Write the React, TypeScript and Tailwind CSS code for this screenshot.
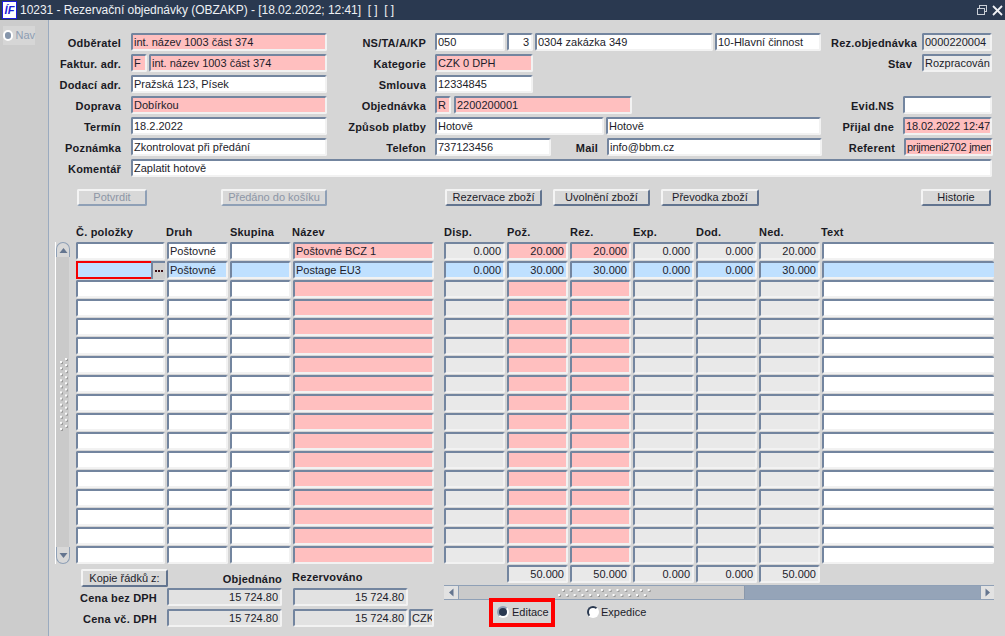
import React from "react";

type Tone = "white" | "pink" | "grey" | "blue" | "total";
const toneClass: Record<Tone, string> = {
  white: "bg-white",
  pink: "bg-[#ffbfbf]",
  grey: "bg-[#e9e9e9]",
  blue: "bg-[#bfe0ff]",
  total: "bg-[#e2e2e2]",
};

function Field({ w, tone = "white", right, h = "h-[18px]", children, className = "" }: { w: string; tone?: Tone; right?: boolean; h?: string; children?: React.ReactNode; className?: string }) {
  return (
    <div
      className={`${w} ${h} ${toneClass[tone]} ${right ? "justify-end pr-[2px]" : "pl-[1px]"} ${className} shrink-0 flex items-center overflow-hidden whitespace-nowrap rounded-[2px] border-2 border-t-[#73859f] border-l-[#73859f] border-r-[#f2f2f2] border-b-[#f2f2f2] pt-[1px] text-[11px] leading-none text-[#1c1c2a]`}
    >
      {children}
    </div>
  );
}

function Label({ w, className = "", children }: { w: string; className?: string; children: React.ReactNode }) {
  return <div className={`${w} ${className} h-[18px] shrink-0 text-right text-[11px] font-bold tracking-[0.2px] leading-[20px] text-[#1a1a24] whitespace-nowrap`}>{children}</div>;
}

function Btn({ w, disabled, className = "", h = "h-[17px]", children }: { w: string; disabled?: boolean; className?: string; h?: string; children: React.ReactNode }) {
  return (
    <div
      className={`${w} ${h} ${className} ${disabled ? "text-[#8d96a6] border-r-[#8fa0b6] border-b-[#8fa0b6]" : "text-[#1c1c2a] border-r-[#62748f] border-b-[#62748f]"} shrink-0 flex items-center justify-center whitespace-nowrap rounded-[2px] border-2 border-t-[#f4f4f4] border-l-[#f4f4f4] bg-[#d8d8d8] text-[11px] leading-none`}
    >
      {children}
    </div>
  );
}

function Form() {
  return (
    <div className="flex flex-col gap-[3px]">
      <div className="flex">
        <Label w="w-[72px]" className="mr-[10px]">Odběratel</Label>
        <Field w="w-[196px]" tone="pink">int. název 1003 část 374</Field>
        <Label w="w-[99px]" className="mr-[9px]">NS/TA/A/KP</Label>
        <Field w="w-[70px]" className="mr-[2px]">050</Field>
        <Field w="w-[26px]" right className="mr-[2px]">3</Field>
        <Field w="w-[178px]" className="mr-[2px]">0304 zakázka 349</Field>
        <Field w="w-[106px]">10-Hlavní činnost</Field>
        <Label w="w-[96px]" className="mr-[5px]">Rez.objednávka</Label>
        <Field w="w-[70px]" tone="grey">0000220004</Field>
      </div>
      <div className="flex">
        <Label w="w-[72px]" className="mr-[10px]">Faktur. adr.</Label>
        <Field w="w-[16px]" tone="pink" className="mr-[2px]">F</Field>
        <Field w="w-[178px]" tone="pink">int. název 1003 část 374</Field>
        <Label w="w-[99px]" className="mr-[9px]">Kategorie</Label>
        <Field w="w-[98px]" tone="pink">CZK 0 DPH</Field>
        <Label w="w-[384px]" className="mr-[5px] pr-[5px]">Stav</Label>
        <Field w="w-[70px]" tone="grey">Rozpracován</Field>
      </div>
      <div className="flex">
        <Label w="w-[72px]" className="mr-[10px]">Dodací adr.</Label>
        <Field w="w-[196px]">Pražská 123, Písek</Field>
        <Label w="w-[99px]" className="mr-[9px]">Smlouva</Label>
        <Field w="w-[98px]">12334845</Field>
      </div>
      <div className="flex">
        <Label w="w-[72px]" className="mr-[10px]">Doprava</Label>
        <Field w="w-[196px]" tone="pink">Dobírkou</Field>
        <Label w="w-[99px]" className="mr-[9px]">Objednávka</Label>
        <Field w="w-[16px]" tone="pink" className="mr-[3px]">R</Field>
        <Field w="w-[178px]" tone="pink">2200200001</Field>
        <Label w="w-[262px]" className="mr-[9px]">Evid.NS</Label>
        <Field w="w-[89px]" />
      </div>
      <div className="flex">
        <Label w="w-[72px]" className="mr-[10px]">Termín</Label>
        <Field w="w-[196px]">18.2.2022</Field>
        <Label w="w-[99px]" className="mr-[9px]">Způsob platby</Label>
        <Field w="w-[169px]" className="mr-[2px]">Hotově</Field>
        <Field w="w-[215px]">Hotově</Field>
        <Label w="w-[73px]" className="mr-[9px]">Přijal dne</Label>
        <Field w="w-[89px]" tone="pink" className="tracking-[-0.1px]">18.02.2022 12:47</Field>
      </div>
      <div className="flex">
        <Label w="w-[72px]" className="mr-[10px]">Poznámka</Label>
        <Field w="w-[196px]">Zkontrolovat při předání</Field>
        <Label w="w-[99px]" className="mr-[9px]">Telefon</Label>
        <Field w="w-[116px]">737123456</Field>
        <Label w="w-[47px]" className="mr-[9px]">Mail</Label>
        <Field w="w-[215px]">info@bbm.cz</Field>
        <Label w="w-[73px]" className="mr-[9px]">Referent</Label>
        <Field w="w-[89px]" tone="pink" className="tracking-[-0.3px]">prijmeni2702 jmen</Field>
      </div>
      <div className="flex">
        <Label w="w-[72px]" className="mr-[10px]">Komentář</Label>
        <Field w="w-[861px]">Zaplatit hotově</Field>
      </div>
    </div>
  );
}

function Buttons() {
  return (
    <div className="flex mt-[12px] ml-[28px]">
      <Btn w="w-[70px]" disabled>Potvrdit</Btn>
      <Btn w="w-[106px]" disabled className="ml-[74px]">Předáno do košíku</Btn>
      <Btn w="w-[97px]" className="ml-[118px]">Rezervace zboží</Btn>
      <Btn w="w-[97px]" className="ml-[11px]">Uvolnění zboží</Btn>
      <Btn w="w-[98px]" className="ml-[11px]">Převodka zboží</Btn>
      <Btn w="w-[70px]" className="ml-[162px]">Historie</Btn>
    </div>
  );
}

const numCols = ["w-[61px]", "w-[61px]", "w-[61px]", "w-[61px]", "w-[61px]", "w-[61px]"];
const numTones: Tone[] = ["grey", "pink", "pink", "grey", "grey", "grey"];

function TableHeader() {
  const H = ({ w, c = "", t }: { w: string; c?: string; t: string }) => (
    <div className={`${w} ${c} shrink-0 text-[11px] font-bold tracking-[0.2px] leading-[18px] text-[#1a1a24]`}>{t}</div>
  );
  return (
    <div className="flex gap-[2px] mt-[17px] ml-[27px] h-[15px] mb-[4px]">
      <H w="w-[89px]" t="Č. položky" />
      <H w="w-[61px]" c="-ml-[1px] mr-[1px]" t="Druh" />
      <H w="w-[61px]" t="Skupina" />
      <H w="w-[141px]" c="-ml-[1px] mr-[1px]" t="Název" />
      <H w="w-[61px]" c="ml-[8px]" t="Disp." />
      <H w="w-[61px]" t="Pož." />
      <H w="w-[61px]" t="Rez." />
      <H w="w-[61px]" t="Exp." />
      <H w="w-[61px]" t="Dod." />
      <H w="w-[61px]" t="Ned." />
      <H w="w-[120px]" c="-ml-[1px]" t="Text" />
    </div>
  );
}

function Row({ i }: { i: number }) {
  const active = i === 1;
  const t = (base: Tone): Tone => (active ? "blue" : base);
  const druh = i < 2 ? "Poštovné" : "";
  const name = i === 0 ? "Poštovné BCZ 1" : i === 1 ? "Postage EU3" : "";
  const nums = i === 0 ? ["0.000", "20.000", "20.000", "0.000", "0.000", "20.000"] : i === 1 ? ["0.000", "30.000", "30.000", "0.000", "0.000", "30.000"] : ["", "", "", "", "", ""];
  return (
    <div className="flex gap-[2px]">
      {active ? (
        <div className="flex w-[89px] h-[18px] shrink-0">
          <div className="w-[75px] h-[18px] border-2 border-[#f40000] border-r-0 bg-[#bfe0ff]" />
          <div className="w-[14px] h-[18px] flex items-center justify-center gap-[1px] bg-[#cfcfcf] border-t-2 border-l-2 border-[#73859f]">
            <span className="w-[2px] h-[2px] bg-[#3a0d14]" />
            <span className="w-[2px] h-[2px] bg-[#3a0d14]" />
            <span className="w-[2px] h-[2px] bg-[#3a0d14]" />
          </div>
        </div>
      ) : (
        <Field w="w-[89px]" />
      )}
      <Field w="w-[61px]" tone={t("white")}>{druh}</Field>
      <Field w="w-[61px]" tone={t("white")} />
      <Field w="w-[141px]" tone={t("pink")}>{name}</Field>
      {numCols.map((w, k) => (
        <Field key={k} w={w} tone={t(numTones[k])} right className={k === 0 ? "ml-[8px]" : ""}>{nums[k]}</Field>
      ))}
      <Field w="w-[172px]" tone={t("white")} className="border-r-0" />
    </div>
  );
}

function Dots({ vertical }: { vertical?: boolean }) {
  const n = 12;
  const items = Array.from({ length: n * 2 }, (_, k) => k);
  return vertical ? (
    <svg width="13" height="76" viewBox="0 0 13 76" className="block">
      {items.map((k) => {
        const col = k % 2 === 0 ? 9 : 4;
        const y = k * 3.04 + 1;
        return (
          <g key={k}>
            <rect x={col + 1} y={y + 1} width="2" height="2" fill="#9a9a9a" />
            <rect x={col} y={y} width="2" height="2" fill="#fafafa" />
          </g>
        );
      })}
    </svg>
  ) : (
    <svg width="94" height="10" viewBox="0 0 94 10" className="block">
      {items.map((k) => {
        const y = k % 2 === 0 ? 6 : 1;
        const x = k * 3.9 + 1;
        return (
          <g key={k}>
            <rect x={x + 1} y={y + 1} width="2" height="2" fill="#9a9a9a" />
            <rect x={x} y={y} width="2" height="2" fill="#fafafa" />
          </g>
        );
      })}
    </svg>
  );
}

function Arrow({ d, w = 9, h = 9 }: { d: string; w?: number; h?: number }) {
  return (
    <svg width={w} height={h} viewBox="0 0 9 9">
      <polygon points={d} fill="#64758f" />
    </svg>
  );
}

function VScroll() {
  return (
    <div className="w-[15px] shrink-0 flex flex-col ml-[6px] mr-[6px] h-[322px] border-l border-white">
      <div className="h-[15px] w-[14px] rounded-t-[7px] border border-b-0 border-[#8fa0b6] bg-[#d8d8d8] flex items-center justify-center">
        <Arrow d="0.5,7 8.5,7 4.5,2" />
      </div>
      <div className="flex-1 bg-[#cacaca] w-[13px] flex items-center justify-center pb-[14px]">
        <Dots vertical />
      </div>
      <div className="h-[17px] w-[14px] rounded-b-[7px] border border-t-0 border-[#8fa0b6] bg-[#d8d8d8] flex items-center justify-center">
        <Arrow d="0.5,2 8.5,2 4.5,7" />
      </div>
    </div>
  );
}

function HScroll() {
  return (
    <div className="flex w-[550px] h-[15px] mt-[2px] bg-[#95a4b8] border-y border-[#8fa0b6]">
      <div className="w-[15px] bg-[#e2e2e2] border-r border-[#8fa0b6] flex items-center justify-center">
        <Arrow d="6.5,0.5 6.5,8.5 2,4.5" />
      </div>
      <div className="w-[286px] bg-[#cacaca] border-r border-[#8a98ab] flex items-center justify-center pt-[1px] ">
        <div className="ml-[4px]"><Dots /></div>
      </div>
      <div className="flex-1" />
      <div className="w-[14px] bg-[#e2e2e2] border-l border-[#8fa0b6] flex items-center justify-center">
        <Arrow d="2.5,0.5 2.5,8.5 7,4.5" />
      </div>
    </div>
  );
}

function Radio({ on }: { on?: boolean }) {
  return (
    <span className={`w-[12px] h-[12px] -mt-[2px] shrink-0 rounded-full border-2 border-r-white border-b-white ${on ? "bg-[#2a3950] border-t-[#8fa0b6] border-l-[#8fa0b6]" : "bg-white border-t-[#2a3950] border-l-[#2a3950]"}`} />
  );
}

function Bottom() {
  return (
    <div className="flex">
      <div className="w-[395px] shrink-0 flex flex-col">
        <div className="flex h-[24px] pt-[5px]">
          <Btn w="w-[87px]" h="h-[18px]" className="ml-[32px]">Kopie řádků z:</Btn>
          <Label w="w-[114px]">Objednáno</Label>
          <div className="ml-[10px] text-[11px] font-bold tracking-[0.2px] leading-[16px] text-[#1a1a24]">Rezervováno</div>
        </div>
        <div className="flex">
          <Label w="w-[108px]" className="mr-[10px]">Cena bez DPH</Label>
          <Field w="w-[115px]" tone="total" right className="pr-[1px]">15 724.80</Field>
          <Field w="w-[115px]" tone="total" right className="ml-[11px] pr-[1px]">15 724.80</Field>
        </div>
        <div className="flex mt-[3px]">
          <Label w="w-[108px]" className="mr-[10px]">Cena vč. DPH</Label>
          <Field w="w-[115px]" tone="total" right className="pr-[1px]">15 724.80</Field>
          <Field w="w-[115px]" tone="total" right className="ml-[11px] pr-[1px]">15 724.80</Field>
          <Field w="w-[25px]" tone="total" className="ml-[1px]">CZK</Field>
        </div>
      </div>
      <div className="flex flex-col">
        <div className="flex gap-[2px] ml-[63px] mt-[1px]">
          {["50.000", "50.000", "0.000", "0.000", "50.000"].map((v, k) => (
            <Field key={k} w="w-[61px]" tone="grey" right>{v}</Field>
          ))}
        </div>
        <HScroll />
        <div className="flex items-start -mt-[2px] ml-[45px]">
          <div className="w-[66px] h-[29px] border-[4px] border-[#ff0000] flex items-center gap-[3px] pl-[4px] text-[11px] leading-none text-[#1c1c2a]">
            <Radio on />
            <span>Editace</span>
          </div>
          <div className="ml-[32px] mt-[9px] flex items-center gap-[2px] text-[11px] leading-none text-[#1c1c2a]">
            <Radio />
            <span>Expedice</span>
          </div>
        </div>
      </div>
    </div>
  );
}

export default function App() {
  return (
    <div className="w-[1005px] h-[636px] overflow-hidden flex flex-col bg-[#d6d6d6] font-['Liberation_Sans',Arial,sans-serif]">
      <div className="h-[20px] shrink-0 flex items-center bg-[#2a3950] text-[#eef1f5]">
        <div className="w-[15px] h-[18px] ml-[2px] shrink-0 bg-white border border-[#1b1bd8] flex items-center justify-center text-[11px] font-bold italic leading-none text-[#1b1bd8]">ÍF</div>
        <div className="ml-[3px] text-[12px] leading-none tracking-[-0.03px] whitespace-nowrap">10231 - Rezervační objednávky (OBZAKP) - [18.02.2022; 12:41]&nbsp; [ ]&nbsp; [ ]</div>
        <div className="ml-auto mr-[2px] flex items-center gap-[4px]">
          <svg width="12" height="12" viewBox="0 0 12 12" fill="none" stroke="#c9ced6" strokeWidth="1">
            <rect x="3.5" y="1.5" width="7" height="6" />
            <rect x="1.5" y="4.5" width="7" height="6" fill="#2a3950" />
          </svg>
          <svg width="11" height="11" viewBox="0 0 11 11" stroke="#f0f2f5" strokeWidth="1.8">
            <line x1="1" y1="1" x2="10" y2="10" />
            <line x1="10" y1="1" x2="1" y2="10" />
          </svg>
        </div>
      </div>
      <div className="flex flex-1 min-h-0">
        <div className="w-[49px] shrink-0 bg-[#cccccc] border-r border-[#9aaabf] pt-[6px] pl-[3px]">
          <div className="w-[32px] h-[19px] bg-[#d6d6d6] flex items-center gap-[2px] text-[11px] leading-none text-[#8d9db3]">
            <span className="w-[11px] h-[11px] rounded-full bg-[#8595ab] border-2 border-white" />
            Nav
          </div>
        </div>
        <div className="flex-1 min-w-0 flex flex-col pt-[13px]">
          <Form />
          <Buttons />
          <TableHeader />
          <div className="flex">
            <VScroll />
            <div className="flex flex-col gap-[1px]">
              {Array.from({ length: 17 }, (_, i) => <Row key={i} i={i} />)}
            </div>
          </div>
          <Bottom />
        </div>
      </div>
    </div>
  );
}
